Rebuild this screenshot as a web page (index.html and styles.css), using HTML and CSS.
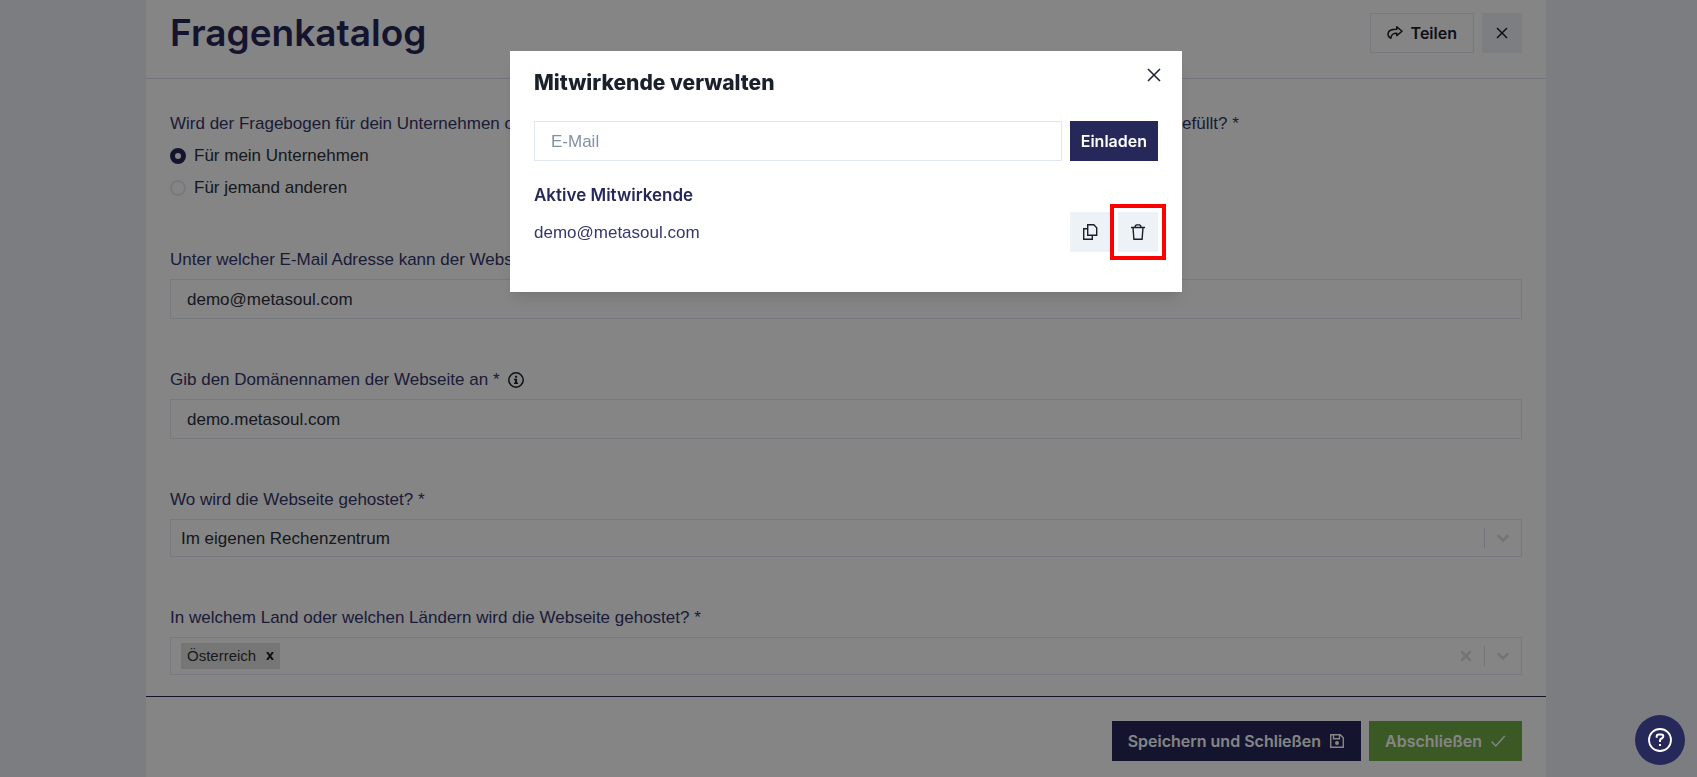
FILE: index.html
```html
<!DOCTYPE html>
<html lang="de">
<head>
<meta charset="utf-8">
<meta name="viewport" content="width=device-width, initial-scale=1">
<title>Fragenkatalog</title>
<link rel="stylesheet" href="styles.css">
</head>
<body>
<div class="page">
  <main class="sheet">
    <header class="sheet-header">
      <h1>Fragenkatalog</h1>
      <div class="actions">
        <button type="button" class="btn btn-outline">
          <svg class="icon" viewBox="0 0 16 16" aria-hidden="true"><path d="M9.800 1.800 15 6.200 9.800 10.600V8.200C6.200 8.100 4.300 9 3.900 13.300 2.400 12.600 1 11.200 1 9c0-3.300 3.600-4.700 8.800-4.700z" fill="none" stroke="currentColor" stroke-width="1.500" stroke-linejoin="round"/></svg>
          Teilen
        </button>
        <button type="button" class="btn btn-soft" aria-label="Schließen">
          <svg class="icon" viewBox="0 0 16 16" aria-hidden="true"><path d="M3 3l10 10M13 3 3 13" stroke="currentColor" stroke-width="1.500"/></svg>
        </button>
      </div>
    </header>

    <form class="questions">
      <fieldset class="field">
        <legend class="label">Wird der Fragebogen für dein Unternehmen oder für jemand anderes (zum Beispiel als Agentur für einen deiner eigenen Partner) ausgefüllt? *</legend>
        <label class="choice"><input type="radio" name="ziel" checked>Für mein Unternehmen</label>
        <label class="choice"><input type="radio" name="ziel">Für jemand anderen</label>
      </fieldset>

      <div class="field">
        <label class="label" for="kontakt">Unter welcher E-Mail Adresse kann der Webseitenbetreiber kontaktiert werden? *</label>
        <input class="input" id="kontakt" type="email" value="demo@metasoul.com">
      </div>

      <div class="field">
        <div class="label-row">
          <label class="label" for="domain">Gib den Domänennamen der Webseite an *</label>
          <svg class="icon" viewBox="0 0 16 16" role="img" aria-label="Information"><circle cx="8" cy="8" r="7.200" fill="none" stroke="currentColor" stroke-width="1.500"/><path d="M7.100 3.700h2v2h-2zM6 6.800h3.100v3.700H10v1.500H6v-1.500h1.100V8.200H6z" fill="currentColor"/></svg>
        </div>
        <input class="input" id="domain" type="text" value="demo.metasoul.com">
      </div>

      <div class="field">
        <label class="label" for="hosting">Wo wird die Webseite gehostet? *</label>
        <div class="picker">
          <select id="hosting"><option>Im eigenen Rechenzentrum</option></select>
          <span class="indicator"><svg class="chevron" viewBox="0 0 20 20" aria-hidden="true"><path d="m5.500 8 4.500 4.500L14.500 8" fill="none" stroke="currentColor" stroke-width="2.600" stroke-linecap="round"/></svg></span>
        </div>
      </div>

      <div class="field">
        <label class="label" for="land">In welchem Land oder welchen Ländern wird die Webseite gehostet? *</label>
        <div class="picker">
          <span class="tag">Österreich<button type="button" aria-label="Österreich entfernen"><svg class="cross" viewBox="0 0 8 8" aria-hidden="true"><path d="m1 0 6 8M7 0 1 8" stroke="currentColor" stroke-width="2"/></svg></button></span>
          <input id="land" type="text">
          <button type="button" class="clear" aria-label="Auswahl löschen"><svg class="chevron" viewBox="0 0 20 20" aria-hidden="true"><path d="m6 6 8 8M14 6l-8 8" stroke="currentColor" stroke-width="2.600" stroke-linecap="round"/></svg></button>
          <span class="indicator"><svg class="chevron" viewBox="0 0 20 20" aria-hidden="true"><path d="m5.500 8 4.500 4.500L14.500 8" fill="none" stroke="currentColor" stroke-width="2.600" stroke-linecap="round"/></svg></span>
        </div>
      </div>
    </form>

    <footer class="sheet-footer">
      <button type="button" class="btn btn-primary">Speichern und Schließen
        <svg class="icon" viewBox="0 0 16 16" aria-hidden="true"><path d="M1.700 1.700h9.600l3 3v9.600H1.700zM4.500 2v3.700h6V2" fill="none" stroke="currentColor" stroke-width="1.400"/><circle cx="8" cy="10" r="2" fill="currentColor"/></svg>
      </button>
      <button type="button" class="btn btn-success">Abschließen
        <svg class="icon" viewBox="0 0 16 16" aria-hidden="true"><path d="m1.500 8.500 4.300 4.500L14.700 3" fill="none" stroke="currentColor" stroke-width="1.400"/></svg>
      </button>
    </footer>
  </main>
</div>

<div class="overlay">
  <section class="modal" role="dialog" aria-modal="true" aria-labelledby="modal-title">
    <header class="modal-header">
      <h2 id="modal-title">Mitwirkende verwalten</h2>
      <button type="button" class="modal-close" aria-label="Dialog schließen">
        <svg class="icon" viewBox="0 0 16 16" aria-hidden="true"><path d="M2 2l12 12M14 2 2 14" stroke="currentColor" stroke-width="1.500"/></svg>
      </button>
    </header>
    <form class="invite">
      <input class="input" type="email" placeholder="E-Mail" aria-label="E-Mail">
      <button type="button" class="btn btn-primary btn-tight">Einladen</button>
    </form>
    <h3>Aktive Mitwirkende</h3>
    <div class="member">
      <span class="member-mail">demo@metasoul.com</span>
      <button type="button" class="btn btn-soft" aria-label="Link kopieren">
        <svg class="icon" viewBox="0 0 16 16" aria-hidden="true"><path d="M5.700.8h6.100l2.900 2.900v7.500h-9z M5.500 4.800H1.700v10.400h8.600v-3.700" fill="none" stroke="currentColor" stroke-width="1.400"/></svg>
      </button>
      <button type="button" class="btn btn-soft marked" aria-label="Mitwirkende entfernen">
        <svg class="icon" viewBox="0 0 16 16" aria-hidden="true"><path d="M1 3.500h14M3 3.500l.9 11.700h8.200L13 3.500M5.200 3.200V2l1.100-1.100h3.400L10.800 2v1.200" fill="none" stroke="currentColor" stroke-width="1.400"/></svg>
      </button>
    </div>
  </section>
</div>

<button type="button" class="help" aria-label="Hilfe">
  <svg viewBox="0 0 24 24" aria-hidden="true"><circle cx="12" cy="12" r="11" fill="none" stroke="currentColor" stroke-width="1.800"/><path d="M8.700 9.700V8.400c0-1.200.7-1.900 1.900-1.900h2.800c1.200 0 1.900.7 1.900 1.800 0 1.300-.7 1.700-1.700 2.200-1 .5-1.600.9-1.600 2v1.600" fill="none" stroke="currentColor" stroke-width="2"/><path d="M11 16h2v2h-2z" fill="currentColor"/></svg>
</button>
</body>
</html>
```
FILE: styles.css
```css
:root {
  --navy: #27285a;
  --label: #35366c;
  --ink: #1a202c;
  --text: #2b303a;
  --line: #e2e8f0;
  --body-font: "Liberation Sans", Arial, sans-serif;
  --strong-font: Inter, "Liberation Sans", sans-serif;
}

* { box-sizing: border-box; }

body {
  margin: 0;
  background: #edf0f8;
  color: var(--navy);
  font: 17px/26px var(--body-font);
}

h1, h2, h3 { margin: 0; font-family: var(--strong-font); }
button, input, select { font: inherit; color: var(--ink); border-radius: 0; }
button { border: 0; padding: 0; background: none; cursor: pointer; }
svg { display: block; flex: none; }
.icon { width: 16px; height: 16px; }

.page {
  display: flex;
  justify-content: center;
  min-height: 100vh;
  padding-right: 5px;
}

.sheet {
  display: flex;
  flex-direction: column;
  width: 100%;
  max-width: 1400px;
  background: #fff;
}

.sheet-header {
  display: flex;
  align-items: center;
  justify-content: space-between;
  padding: 9px 24px 21px;
  border-bottom: 1px solid #dcdcee;
}

h1 { font-size: 37px; line-height: 48px; font-weight: 600; }

.actions { display: flex; gap: 8px; }

.btn {
  display: flex;
  align-items: center;
  justify-content: center;
  gap: 8px;
  height: 40px;
  padding: 0 16px;
  font: 600 16px/24px var(--strong-font);
  white-space: nowrap;
}

.btn-outline { border: 1px solid var(--line); }
.btn-soft { width: 40px; padding: 0; background: #edf2f7; }
.btn-primary { background: var(--navy); color: #fff; }
.btn-success { background: #70ab45; color: #fff; }
.btn-tight { padding: 0 11px; }

.questions {
  display: flex;
  flex-direction: column;
  gap: 48px;
  padding: 32px 24px 21px;
}

.field {
  display: flex;
  flex-direction: column;
  gap: 6px;
  min-width: 0;
  margin: 0;
  padding: 0;
  border: 0;
}

fieldset.field { margin-bottom: -2px; }

.label { padding: 0; color: var(--label); white-space: nowrap; }
legend.label { margin-bottom: 6px; }
.label-row { display: flex; align-items: center; gap: 8px; color: var(--ink); }

.choice { display: flex; align-items: center; gap: 8px; color: var(--text); }

.choice input {
  appearance: none;
  width: 16px;
  height: 16px;
  margin: 0;
  border: 2px solid var(--line);
  border-radius: 50%;
}

.choice input:checked { border: 5px solid var(--navy); }

.input {
  width: 100%;
  height: 40px;
  padding: 2px 16px 0;
  border: 1px solid var(--line);
  background: #fff;
  color: var(--text);
}

.input::placeholder { color: #8390a3; opacity: 1; }

.picker {
  display: flex;
  align-items: center;
  height: 38px;
  padding-left: 10px;
  border: 1px solid var(--line);
}

.picker select, .picker > input {
  appearance: none;
  flex: 1;
  min-width: 0;
  height: 100%;
  padding: 2px 0 0;
  border: 0;
  background: none;
  color: var(--text);
  outline: 0;
}

.indicator {
  display: flex;
  align-items: center;
  height: 20px;
  padding: 0 8px;
  border-left: 1px solid #d9dce6;
}

.clear { padding: 0 8px; }
.chevron { width: 20px; height: 20px; color: #dadfe7; }

.tag {
  display: flex;
  align-items: center;
  gap: 10px;
  height: 26px;
  padding: 0 6px;
  background: #e3e3e3;
  color: #333;
  font-size: 15px;
}

.cross { width: 8px; height: 8px; }

.sheet-footer {
  display: flex;
  justify-content: flex-end;
  gap: 8px;
  margin-top: auto;
  padding: 24px 24px 16px;
  border-top: 1px solid var(--navy);
}

.overlay {
  position: fixed;
  inset: 0;
  display: flex;
  align-items: flex-start;
  justify-content: center;
  padding: 51px 5px 0 0;
  background: rgba(0, 0, 0, 0.48);
}

.modal {
  width: 100%;
  max-width: 672px;
  padding: 16px 24px 40px;
  background: #fff;
  box-shadow: 0 10px 15px -3px rgba(0, 0, 0, 0.1), 0 4px 6px -2px rgba(0, 0, 0, 0.05);
}

.modal-header {
  display: flex;
  align-items: flex-start;
  justify-content: space-between;
  margin-bottom: 22px;
}

h2 { color: var(--ink); font-size: 21px; line-height: 32px; font-weight: 800; }
.modal-close { margin-right: -4px; }
.invite { display: flex; gap: 8px; margin-bottom: 22px; }
h3 { margin-bottom: 5px; font-size: 17px; line-height: 24px; font-weight: 600; }
.member { display: flex; align-items: center; gap: 8px; }
.member-mail { flex: 1; padding-top: 2px; color: var(--label); }
.marked { outline: 4px solid #f00; outline-offset: 4px; }

.help {
  position: fixed;
  right: 12px;
  bottom: 12px;
  display: flex;
  align-items: center;
  justify-content: center;
  width: 50px;
  height: 50px;
  border-radius: 50%;
  background: var(--navy);
  color: #fff;
}

.help svg { width: 24px; height: 24px; }
```
